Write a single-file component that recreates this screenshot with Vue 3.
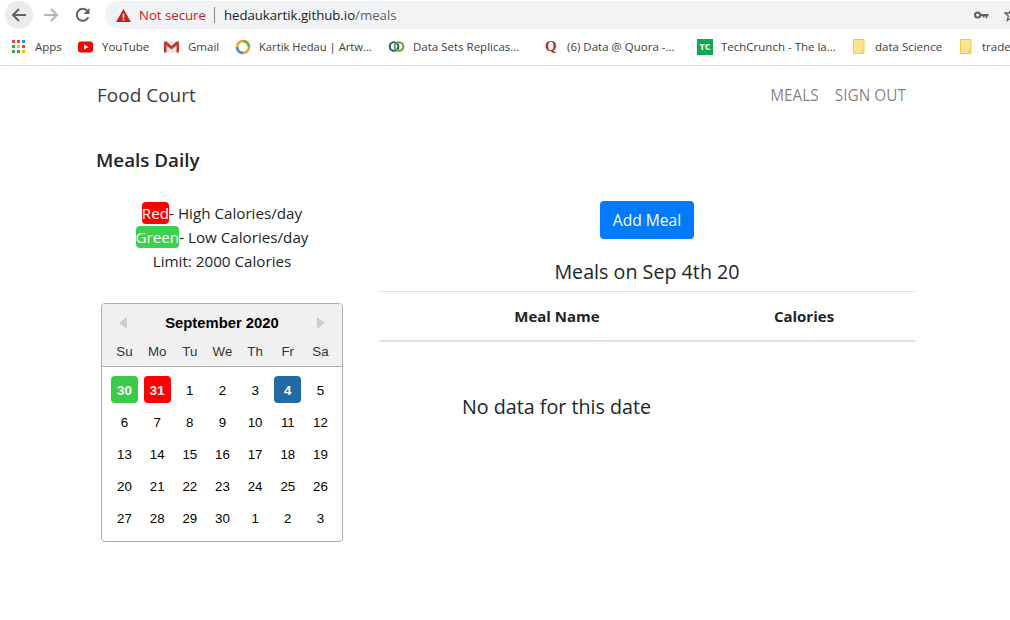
<template>
  <div class="chrome">
    <div class="toolbar">
      <div class="nav-btn back">
        <svg width="18" height="18" viewBox="0 0 18 18"><path d="M16 9H3.500M9 3 3 9l6 6" fill="none" stroke="#5f6368" stroke-width="2"/></svg>
      </div>
      <div class="nav-btn">
        <svg width="18" height="18" viewBox="0 0 18 18"><path d="M2 9h12.500M9 3l6 6-6 6" fill="none" stroke="#b4b6b9" stroke-width="2"/></svg>
      </div>
      <div class="nav-btn">
        <svg width="18" height="18" viewBox="0 0 18 18"><path d="M14.300 11.200A6 6 0 1 1 13.400 4.900" fill="none" stroke="#5f6368" stroke-width="2"/><path d="M15.500 2v6h-6z" fill="#5f6368"/></svg>
      </div>
      <div class="omnibox">
        <svg class="warn" width="15" height="13" viewBox="0 0 16 14"><path d="M8 0l8 14H0z" fill="#c5221f"/><path d="M7.100 5h1.800v4.500H7.100zM7.100 10.500h1.800v1.700H7.100z" fill="#fff"/></svg>
        <span class="not-secure">Not secure</span>
        <span class="sep"></span>
        <span class="url">hedaukartik.github.io<span class="url-path">/meals</span></span>
        <span class="spacer"></span>
        <svg class="key" width="15" height="9" viewBox="0 0 15 9"><circle cx="3.600" cy="4" r="2.600" fill="none" stroke="#5f6368" stroke-width="2"/><path d="M6 3h8.500v2.200h-1.200v2h-1.600v-2h-1v1.400H9V5.200H6z" fill="#5f6368"/></svg>
        <svg class="star" width="14" height="14" viewBox="0 0 14 14"><path d="M7 1l1.800 4H13L9.700 8l1 4.500L7 10l-3.700 2.500 1-4.500L1 5h4.200z" fill="none" stroke="#5f6368" stroke-width="1.300"/></svg>
      </div>
    </div>
    <div class="bookmarks">
      <div class="bm apps">
        <svg width="14" height="14" viewBox="0 0 14 14">
          <rect x="0" y="0" width="3" height="3" fill="#ea4335"/><rect x="5" y="0" width="3" height="3" fill="#ea4335"/><rect x="10" y="0" width="3" height="3" fill="#4285f4"/>
          <rect x="0" y="5" width="3" height="3" fill="#34a853"/><rect x="5" y="5" width="3" height="3" fill="#fbbc05"/><rect x="10" y="5" width="3" height="3" fill="#ea4335"/>
          <rect x="0" y="10" width="3" height="3" fill="#34a853"/><rect x="5" y="10" width="3" height="3" fill="#34a853"/><rect x="10" y="10" width="3" height="3" fill="#fbbc05"/>
        </svg>
        <span>Apps</span>
      </div>
      <div class="bm yt">
        <svg width="16" height="12" viewBox="0 0 16 12"><rect width="15" height="11" y="0.500" rx="3" fill="#f00"/><path d="M6 3.500v5l4.500-2.500z" fill="#fff"/></svg>
        <span>YouTube</span>
      </div>
      <div class="bm gm">
        <svg width="15" height="12" viewBox="0 0 15 12"><rect y="0.500" width="15" height="11" fill="#e4e4e4"/><path d="M0 .5h2.500L7.500 5l5-4.500H15V11.500h-2.500V4.500L7.500 8.500 2.500 4.500v7H0z" fill="#c0392b"/></svg>
        <span>Gmail</span>
      </div>
      <div class="bm kh">
        <svg width="16" height="16" viewBox="0 0 16 16"><circle cx="8" cy="8" r="6" fill="none" stroke="#e8a33a" stroke-width="2.500"/><path d="M8 2a6 6 0 0 1 6 6" fill="none" stroke="#67b346" stroke-width="2.500"/><path d="M2 8a6 6 0 0 0 6 6" fill="none" stroke="#4a8fd8" stroke-width="2.500"/></svg>
        <span class="kh-text">Kartik Hedau | Artw...</span>
      </div>
      <div class="bm ds">
        <svg width="17" height="13" viewBox="0 0 17 13"><circle cx="6" cy="6.500" r="4.300" fill="none" stroke="#1c5f8f" stroke-width="2"/><circle cx="11" cy="6.500" r="4.300" fill="none" stroke="#6b9e2a" stroke-width="2"/></svg>
        <span>Data Sets Replicas...</span>
      </div>
      <div class="bm qu">
        <span class="q-logo">Q</span>
        <span>(6) Data @ Quora -...</span>
      </div>
      <div class="bm tc">
        <div class="tc-logo">TC</div>
        <span>TechCrunch - The la...</span>
      </div>
      <div class="bm ds1">
        <svg width="12" height="15" viewBox="0 0 12 15"><path d="M.5.5h10.500v14H.5z" fill="#fde293" stroke="#f0c94e"/><path d="M9 14v-3h2" fill="none" stroke="#f0c94e"/></svg>
        <span>data Science</span>
      </div>
      <div class="bm tr">
        <svg width="12" height="15" viewBox="0 0 12 15"><path d="M.5.5h10.500v14H.5z" fill="#fde293" stroke="#f0c94e"/><path d="M9 14v-3h2" fill="none" stroke="#f0c94e"/></svg>
        <span>trade</span>
      </div>
    </div>
  </div>

  <div class="navbar">
    <span class="brand">Food Court</span>
    <div class="nav-links">
      <span class="link">MEALS</span>
      <span class="link">SIGN OUT</span>
    </div>
  </div>

  <div class="page">
    <h4 class="title">Meals Daily</h4>
    <div class="columns">
      <div class="left">
        <div class="legend">
          <div><span class="tag red">Red</span>- High Calories/day</div>
          <div><span class="tag green">Green</span>- Low Calories/day</div>
          <div>Limit: 2000 Calories</div>
        </div>
        <div class="calendar">
          <div class="cal-head">
            <div class="cal-month">
              <span class="arrow arrow-left"></span>
              <span>September 2020</span>
              <span class="arrow arrow-right"></span>
            </div>
            <div class="cal-row">
              <span v-for="d in dayNames" :key="d" class="cal-cell">{{ d }}</span>
            </div>
          </div>
          <div class="cal-body">
            <div v-for="(week, i) in weeks" :key="i" class="cal-row">
              <span v-for="day in week" :key="day.n + '-' + i" class="cal-cell" :class="day.cls">{{ day.n }}</span>
            </div>
          </div>
        </div>
      </div>
      <div class="right">
        <button class="add-btn">Add Meal</button>
        <div class="meals-title">Meals on Sep 4th 20</div>
        <div class="table-head">
          <span class="th-name">Meal Name</span>
          <span class="th-cal">Calories</span>
        </div>
        <div class="no-data">No data for this date</div>
      </div>
    </div>
  </div>
</template>

<script setup>
const dayNames = ['Su', 'Mo', 'Tu', 'We', 'Th', 'Fr', 'Sa']

// 日历数据
const plain = (list) => list.map((n) => ({ n, cls: '' }))
const weeks = [
  [
    { n: 30, cls: 'day-green' },
    { n: 31, cls: 'day-red' },
    ...plain([1, 2, 3]),
    { n: 4, cls: 'day-selected' },
    { n: 5, cls: '' }
  ],
  plain([6, 7, 8, 9, 10, 11, 12]),
  plain([13, 14, 15, 16, 17, 18, 19]),
  plain([20, 21, 22, 23, 24, 25, 26]),
  plain([27, 28, 29, 30, 1, 2, 3])
]
</script>

<style>
html, body {
  margin: 0;
  background: #fff;
  overflow: hidden;
}
</style>

<style scoped>
.chrome {
  height: 65px;
  border-bottom: 1px solid #dadce0;
  font-family: "Open Sans", "Noto Sans", sans-serif;
  overflow: hidden;
}

.toolbar {
  display: flex;
  align-items: flex-start;
  height: 33px;
  padding: 1px 0 0 5px;
  box-sizing: border-box;
}

.nav-btn {
  width: 28px;
  height: 28px;
  margin-right: 4px;
  border-radius: 50%;
  display: flex;
  align-items: center;
  justify-content: center;
}

.back {
  background: #ebebeb;
}

.omnibox {
  flex: 1;
  height: 28px;
  margin-left: 4px;
  background: #f1f3f4;
  border-radius: 14px 0 0 14px;
  display: flex;
  align-items: center;
  padding-left: 11px;
  min-width: 0;
}

.warn {
  flex: none;
}

.not-secure {
  margin-left: 8px;
  font-size: 13.200px;
  color: #c5221f;
  white-space: nowrap;
}

.sep {
  width: 1px;
  height: 16px;
  background: #80868b;
  margin: 0 9px 0 8px;
}

.url {
  font-size: 13.200px;
  color: #202124;
  white-space: nowrap;
}

.url-path {
  color: #5f6368;
}

.spacer {
  flex: 1;
}

.key {
  flex: none;
  margin-right: 15px;
}

.star {
  flex: none;
  margin-right: -8px;
}

.bookmarks {
  display: flex;
  align-items: center;
  height: 27px;
  padding-left: 12px;
  white-space: nowrap;
  font-size: 11.500px;
  color: #3c4043;
}

.bm {
  display: flex;
  align-items: center;
  flex: none;
  gap: 9px;
}

.apps { width: 66px; }
.yt { width: 86px; gap: 8px; }
.gm { width: 71px; gap: 9px; }
.kh { width: 153px; gap: 8px; }
.kh-text { font-size: 11.200px; }
.ds { width: 157px; gap: 8px; }
.qu { width: 152px; gap: 9px; }
.tc { width: 156px; gap: 8px; }
.ds1 { width: 107px; gap: 10px; }
.tr { gap: 10px; }

.q-logo {
  width: 13px;
  font-family: "Liberation Serif", serif;
  font-weight: 700;
  font-size: 15px;
  color: #b92b27;
}

.tc-logo {
  width: 16px;
  height: 16px;
  background: #0ea84e;
  color: #fff;
  font-size: 9px;
  font-weight: 700;
  line-height: 16px;
  text-align: center;
}

.navbar {
  display: flex;
  align-items: center;
  justify-content: space-between;
  height: 58px;
  padding: 0 104px 0 97px;
  font-family: "Open Sans", "Noto Sans", sans-serif;
}

.brand {
  font-size: 19px;
  color: rgba(0, 0, 0, 0.8);
}

.nav-links {
  display: flex;
  gap: 16px;
}

.link {
  font-size: 15.400px;
  color: rgba(0, 0, 0, 0.5);
}

.page {
  padding-left: 96px;
  font-family: "Open Sans", "Noto Sans", sans-serif;
  color: #212529;
}

.title {
  margin: 0;
  padding-top: 22px;
  font-size: 18.800px;
  font-weight: 600;
  line-height: 28px;
}

.columns {
  display: flex;
  gap: 31px;
  margin-top: 27px;
}

.left {
  width: 252px;
  display: flex;
  flex-direction: column;
  align-items: center;
}

.legend {
  font-size: 15.200px;
  line-height: 24px;
  text-align: center;
}

.tag {
  display: inline-block;
  color: #fff;
  border-radius: 4px;
  line-height: 22px;
}

.red { background: #f00; }
.green { background: #3bd14d; }

.calendar {
  width: 242px;
  height: 239px;
  box-sizing: border-box;
  margin-top: 30px;
  border: 1px solid #aeaeae;
  border-radius: 4px;
  font-family: "Liberation Sans", Arial, sans-serif;
  color: #000;
  font-size: 13.300px;
  overflow: hidden;
}

.cal-head {
  height: 63px;
  box-sizing: border-box;
  background: #f0f0f0;
  border-bottom: 1px solid #aeaeae;
}

.cal-month {
  display: flex;
  align-items: center;
  justify-content: space-between;
  height: 37px;
  padding: 0 17px;
  font-weight: 700;
  font-size: 14.800px;
  box-sizing: border-box;
}

.arrow {
  width: 0;
  height: 0;
  border-top: 6.500px solid transparent;
  border-bottom: 6.500px solid transparent;
}

.arrow-left {
  border-right: 8px solid #ccc;
}

.arrow-right {
  border-left: 8px solid #ccc;
}

.cal-row {
  display: flex;
  justify-content: space-between;
  padding: 0 8px 0 9px;
}

.cal-head .cal-row {
  color: #333;
  line-height: 20px;
  padding-top: 1px;
}

.cal-head .cal-cell {
  height: 20px;
  line-height: 20px;
}

.cal-body {
  padding-top: 9px;
}

.cal-body .cal-row {
  height: 32px;
}

.cal-cell {
  width: 27px;
  height: 27px;
  line-height: 29px;
  text-align: center;
  border-radius: 4px;
}

.day-green,
.day-red,
.day-selected {
  color: #fff;
  font-weight: 700;
}

.day-green { background: #3bcb4a; }
.day-red { background: #f00; }
.day-selected { background: #216ba5; }

.right {
  width: 536px;
  display: flex;
  flex-direction: column;
  align-items: center;
  margin-top: 0;
}

.add-btn {
  width: 94px;
  height: 38px;
  background: #007bff;
  color: #fff;
  border: 0;
  border-radius: 4px;
  font-family: inherit;
  font-size: 15.600px;
  padding: 0;
}

.meals-title {
  margin-top: 19px;
  font-size: 19.700px;
  font-weight: 400;
  line-height: 28px;
}

.table-head {
  align-self: stretch;
  height: 48px;
  margin-top: 5px;
  border-top: 1px solid #dee2e6;
  border-bottom: 2px solid #dee2e6;
  display: flex;
  align-items: center;
  font-size: 15px;
  font-weight: 700;
}

.th-name {
  width: 356px;
  text-align: center;
}

.th-cal {
  width: 138px;
  text-align: center;
}

.no-data {
  align-self: flex-start;
  margin: 51px 0 0 83px;
  font-size: 19.700px;
  font-weight: 400;
  line-height: 28px;
}
</style>
